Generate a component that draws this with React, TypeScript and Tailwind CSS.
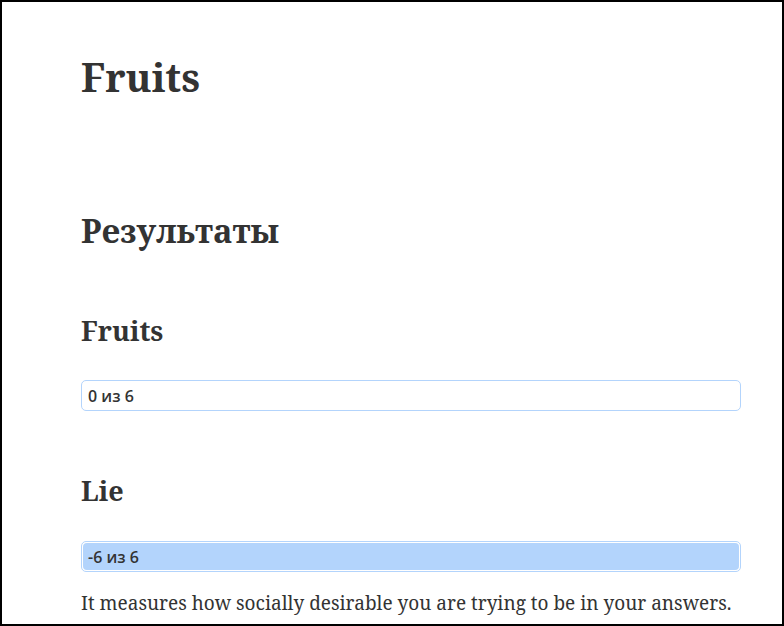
export default function App() {
  const serif = "font-['Noto_Serif','DejaVu_Serif',serif]";
  return (
    <div className="h-[626px] w-[784px] overflow-hidden border-2 border-black bg-white text-[#333]">
      <div className={`flex w-[660px] flex-col ml-[79px] pt-[50px] ${serif}`}>
        <h1 className="text-[39px] leading-[50px] font-bold">Fruits</h1>

        <h2 className="mt-[110px] text-[32.5px] leading-[38px] font-bold">Результаты</h2>

        <h3 className="mt-[65px] text-[27px] leading-[32px] font-bold">Fruits</h3>
        <ScoreBar label="0 из 6" percent={0} className="mt-[33px]" />

        <h3 className="mt-[64px] text-[27px] leading-[32px] font-bold">Lie</h3>
        <ScoreBar label="-6 из 6" percent={100} className="mt-[34px]" />

        <p className="mt-[17px] text-[19px] leading-[28px]">
          It measures how socially desirable you are trying to be in your answers.
        </p>
      </div>
    </div>
  );
}

function ScoreBar({ label, percent, className }: { label: string; percent: number; className?: string }) {
  return (
    <div className={`relative h-[31px] w-full rounded-[5px] border border-[#b3d4fc] p-px ${className ?? ""}`}>
      <div className="h-full rounded-[4px] bg-[#b3d4fc]" style={{ width: `${percent}%` }} />
      <span className="absolute inset-0 flex items-center pl-[6px] font-['Open_Sans',sans-serif] text-[16px] font-semibold text-[#333]">
        {label}
      </span>
    </div>
  );
}
